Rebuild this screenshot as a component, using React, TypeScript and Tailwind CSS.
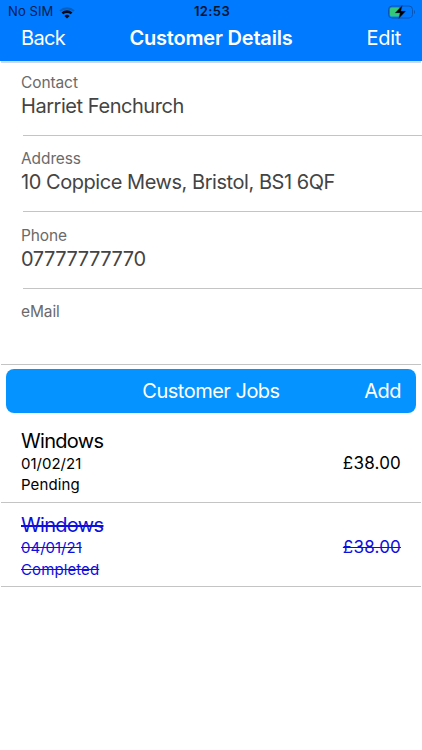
import React from 'react';

const details = [
    { label: 'Contact', value: 'Harriet Fenchurch' },
    { label: 'Address', value: '10 Coppice Mews, Bristol, BS1 6QF' },
    { label: 'Phone', value: '07777777770' },
    { label: 'eMail', value: '' },
];

const jobs = [
    { name: 'Windows', date: '01/02/21', status: 'Pending', price: '£38.00', done: false },
    { name: 'Windows', date: '04/01/21', status: 'Completed', price: '£38.00', done: true },
];

const StatusBar: React.FC = () => (
    <div className="grid grid-cols-3 items-center h-6 pl-2 pr-1.5 text-[13px] text-[#06204f]">
        <div className="flex items-center gap-1.5">
            <span className="tracking-[0.1px]">No SIM</span>
            {/* Top arc is dimmed for a weak signal */}
            <svg className="mt-0.5" width="16" height="12" viewBox="0 0 16 12" fill="none" strokeWidth="2.2">
                <path d="M1 4a10.5 10.5 0 0 1 14 0" stroke="#0560c4" />
                <path d="M3.4 6.4a6.8 6.8 0 0 1 9.2 0" stroke="#020a18" strokeWidth="2.6" />
                <path d="M8 11.4 5.4 9a3.6 3.6 0 0 1 5.2 0z" fill="#020a18" />
            </svg>
        </div>
        <span className="text-center font-semibold tracking-[0.4px] text-[#03132f]">12:53</span>
        <svg className="justify-self-end" width="28" height="14" viewBox="0 0 28 14">
            <rect x="0.5" y="1" width="24" height="12" rx="3.5" fill="none" stroke="#0a55b5" />
            <rect x="2" y="2.5" width="10" height="9" rx="1.5" fill="#35c878" />
            <path d="M14.5 0 7 8h5l-1.5 6L18 6h-5z" fill="#000" stroke="#0a5fc8" strokeWidth="0.4" />
            <path d="M26 5v4c1.300-.5 1.300-3.500 0-4z" fill="#0a55b5" />
        </svg>
    </div>
);

const App: React.FC = () => {
    return (
        <div className="h-[750px] w-full bg-white font-['Inter',sans-serif]">
            <header className="h-[61px] bg-[#007aff]">
                <StatusBar />
                <div className="grid grid-cols-[1fr_auto_1fr] px-[21px] text-[20px] leading-[29px] text-white">
                    <button className="text-left tracking-[-0.7px]">Back</button>
                    <h1 className="font-semibold tracking-[-0.2px]">Customer Details</h1>
                    <button className="text-right tracking-[-0.3px]">Edit</button>
                </div>
            </header>
            <div className="mx-px h-0.5 bg-[#cdd9ee]" />

            <div className="mx-px h-[302px] border-b border-[#c4c4c4]">
                {details.map((item, index) => (
                    <div key={item.label} className="ml-5 h-[76.4px] pt-2.5">
                        <p className="text-[15.5px] leading-5 tracking-[-0.1px] text-[#6a6a6a]">{item.label}</p>
                        <p className="h-[42px] pt-px text-[20px] leading-6 tracking-[-0.45px] text-[#444]">{item.value}</p>
                        {index < details.length - 1 && <hr className="-mr-px ml-0.5 border-[#c4c4c4]" />}
                    </div>
                ))}
            </div>

            <div className="mx-1.5 mt-1 grid h-11 grid-cols-[1fr_auto_1fr] items-center rounded-lg bg-[#0594ff] px-[15px] text-[20px] text-white">
                <h2 className="col-start-2 tracking-[-0.5px]">Customer Jobs</h2>
                <button className="text-right tracking-[-0.5px]">Add</button>
            </div>

            <div className="mx-px pt-[5px]">
                {jobs.map((job) => (
                    <div
                        key={job.date}
                        className={`flex h-[84.5px] items-center justify-between border-b border-[#c4c4c4] px-5 pt-[5px] ${job.done ? 'text-[#0f0fdc] line-through' : 'text-black'}`}
                    >
                        <div>
                            <p className={`text-[20px] leading-6 tracking-[-0.7px] ${job.done ? 'line-through decoration-2' : ''}`}>{job.name}</p>
                            <p className="text-[15px] leading-[21.5px]">{job.date}</p>
                            <p className="text-[15px] leading-[21.5px] tracking-[0.1px]">{job.status}</p>
                        </div>
                        <span className="pt-0.5 text-[17px] tracking-[0.2px]">{job.price}</span>
                    </div>
                ))}
            </div>
        </div>
    );
};

export default App;
